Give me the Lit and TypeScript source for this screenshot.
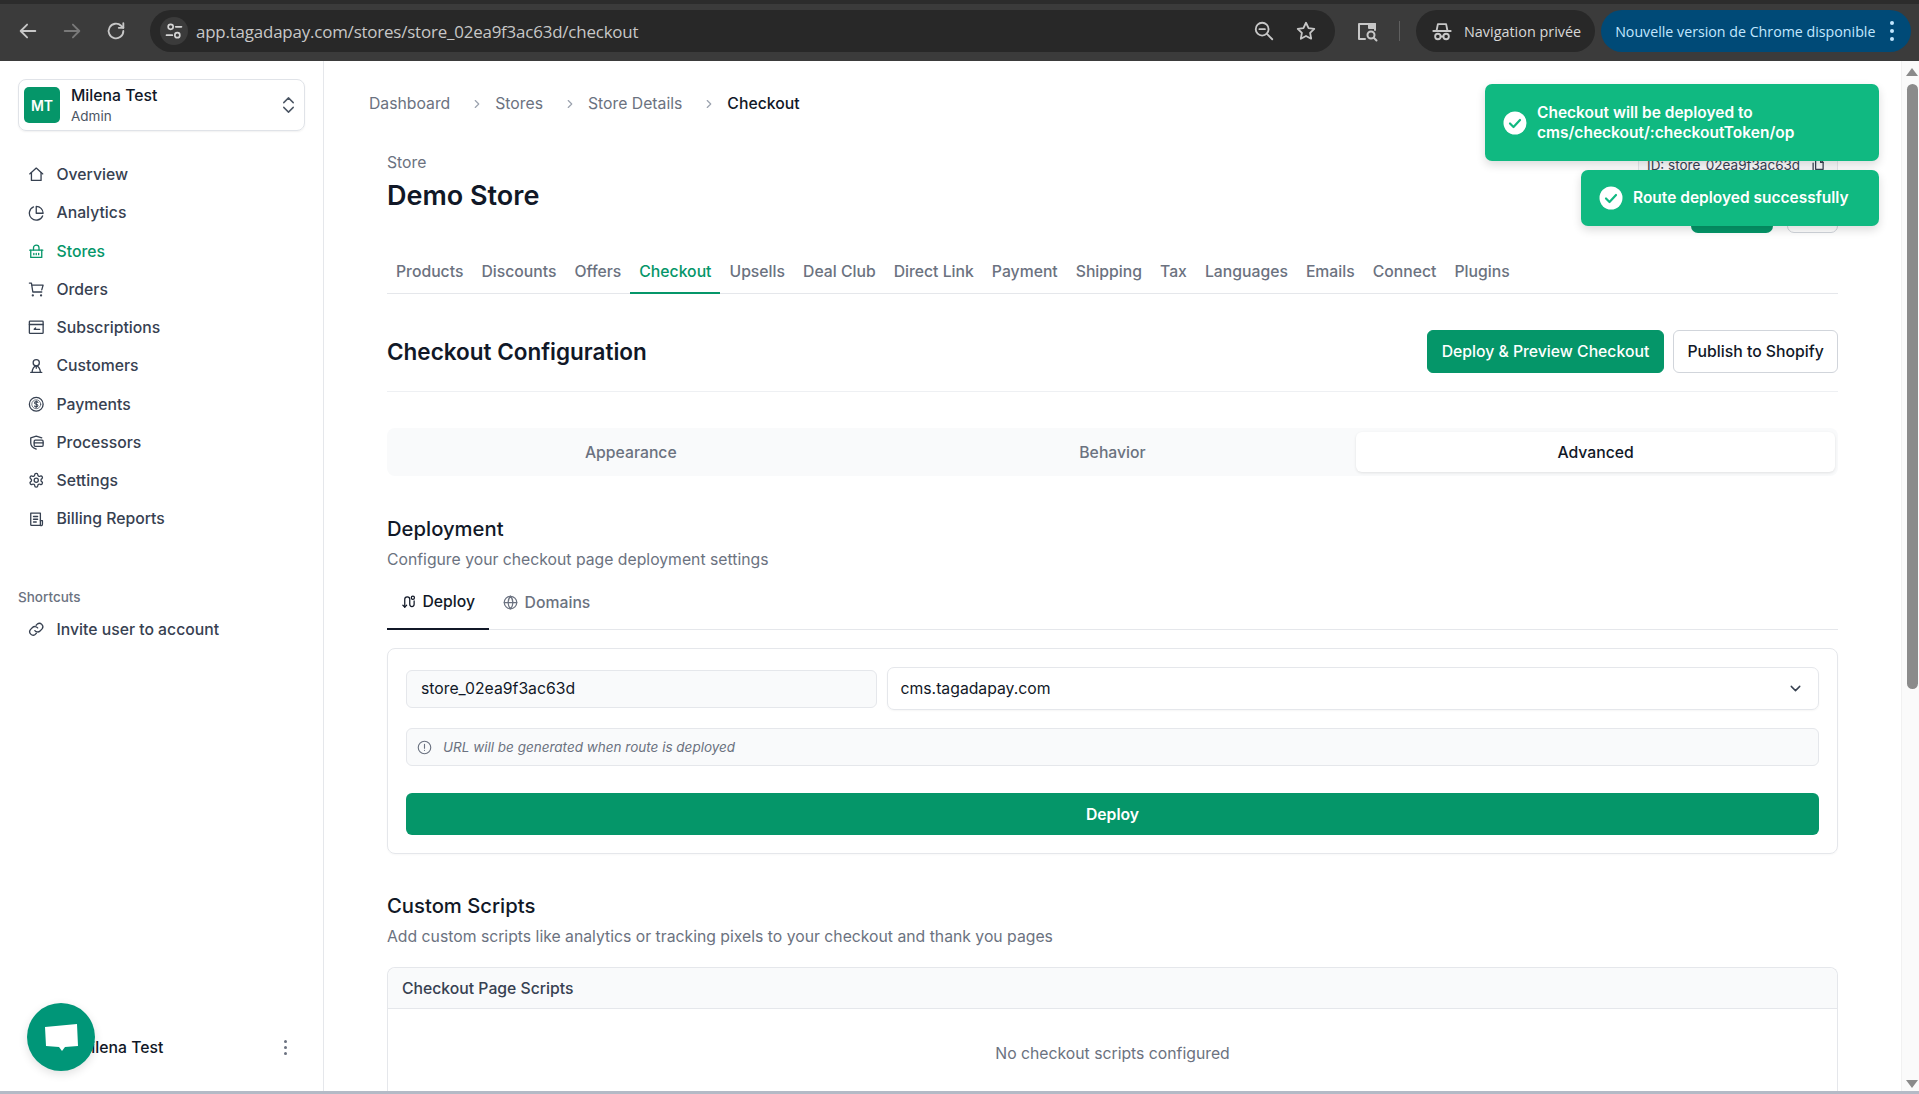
import { LitElement, html, css, svg } from "lit";
import { customElement } from "lit/decorators.js";

const ic = (body: unknown, cls = "ic") => html`<svg class=${cls} viewBox="0 0 24 24" fill="none" stroke="currentColor" stroke-width="2" stroke-linecap="round" stroke-linejoin="round">${body}</svg>`;

const icons: Record<string, unknown> = {
  home: svg`<path d="M2.500 11.500 12 3l9.500 8.500"/><path d="M5 9.500V21h14V9.500"/>`,
  pie: svg`<path d="M21.210 15.890A10 10 0 1 1 8 2.830"/><path d="M22 12A10 10 0 0 0 12 2v10z"/>`,
  basket: svg`<path d="M8 10V7a4 4 0 0 1 8 0v3"/><path d="M2.500 10.500h19"/><path d="M4 10.500V21h16V10.500"/><path d="M8.500 15v2M12 15v2M15.500 15v2"/>`,
  cart: svg`<path d="M2 3h3l2 13h13"/><path d="M6 6h16l-2 7"/><circle cx="7" cy="21" r=".7"/><circle cx="19" cy="21" r=".7"/>`,
  subs: svg`<rect x="2" y="3" width="20" height="18" rx="1"/><path d="M2 8h20"/><path d="M9 15h8M9 15l2-2"/>`,
  user: svg`<circle cx="12" cy="7" r="4.500"/><path d="M4 21h16"/><path d="M6 21c0-5 3-9.500 6-9.500s6 4.500 6 9.500"/><path d="M12 12v3"/>`,
  dollar: svg`<circle cx="12" cy="12" r="10"/><circle cx="12" cy="12" r="6.500" stroke-width="1"/><path d="M14.500 9.500c-.5-1-1.500-1.300-2.500-1.300-1.500 0-2.500.8-2.500 1.900 0 2.600 5 1.200 5 3.800 0 1.100-1 1.900-2.500 1.900-1 0-2-.3-2.500-1.300M12 7v10" stroke-width="1.500"/>`,
  proc: svg`<path d="M12 22c-4-1.500-8-4-8-9V5.500L12 3l8 2.500"/><rect x="9" y="9" width="13" height="9" rx="1.500"/><path d="M9 13h13"/>`,
  gear: svg`<path d="M12.220 2h-.44a2 2 0 0 0-2 2v.18a2 2 0 0 1-1 1.730l-.43.25a2 2 0 0 1-2 0l-.15-.08a2 2 0 0 0-2.730.73l-.22.38a2 2 0 0 0 .73 2.730l.15.1a2 2 0 0 1 1 1.720v.51a2 2 0 0 1-1 1.740l-.15.09a2 2 0 0 0-.73 2.730l.22.38a2 2 0 0 0 2.730.73l.15-.08a2 2 0 0 1 2 0l.43.25a2 2 0 0 1 1 1.730V20a2 2 0 0 0 2 2h.44a2 2 0 0 0 2-2v-.18a2 2 0 0 1 1-1.730l.43-.25a2 2 0 0 1 2 0l.15.08a2 2 0 0 0 2.730-.73l.22-.39a2 2 0 0 0-.73-2.730l-.15-.08a2 2 0 0 1-1-1.740v-.5a2 2 0 0 1 1-1.740l.15-.09a2 2 0 0 0 .73-2.730l-.22-.38a2 2 0 0 0-2.730-.73l-.15.08a2 2 0 0 1-2 0l-.43-.25a2 2 0 0 1-1-1.730V4a2 2 0 0 0-2-2z"/><circle cx="12" cy="12" r="3"/>`,
  bill: svg`<path d="M18 21H5a1 1 0 0 1-1-1V3h14v18z"/><path d="M18 14h3v5a2 2 0 0 1-3 2"/><path d="M8 8h6M8 12h6M8 16h4"/>`,
  link: svg`<path d="M10 14a5 5 0 0 0 7.500.5l3-3a5 5 0 0 0-7-7l-1.700 1.700"/><path d="M14 10a5 5 0 0 0-7.500-.5l-3 3a5 5 0 0 0 7 7l1.700-1.700"/>`,
  route: svg`<circle cx="19" cy="6" r="2.500"/><path d="M6 21V8.500a4 4 0 0 1 8 0v8a3.500 3.500 0 0 0 7 0V11"/><path d="m3 18 3 3 3-3"/>`,
  globe: svg`<circle cx="12" cy="12" r="10"/><path d="M2 12h20"/><path d="M12 2a15 15 0 0 1 0 20 15 15 0 0 1 0-20"/>`,
  info: svg`<circle cx="12" cy="12" r="10"/><path d="M12 7v6M12 16.500v.01"/>`,
  chev: svg`<path d="m6 9 6 6 6-6"/>`,
  updown: svg`<path d="m6 9 6-6 6 6"/><path d="m6 15 6 6 6-6"/>`,
  right: svg`<path d="m9 6 6 6-6 6"/>`,
  copy: svg`<path d="M9 3h8l4 4v11H9z"/><path d="M17 3v4h4"/><path d="M5 8v13h10"/>`,
};

const nav = [
  ["home", "Overview"], ["pie", "Analytics"], ["basket", "Stores"], ["cart", "Orders"], ["subs", "Subscriptions"],
  ["user", "Customers"], ["dollar", "Payments"], ["proc", "Processors"], ["gear", "Settings"], ["bill", "Billing Reports"],
];
const tabs = ["Products", "Discounts", "Offers", "Checkout", "Upsells", "Deal Club", "Direct Link", "Payment", "Shipping", "Tax", "Languages", "Emails", "Connect", "Plugins"];

@customElement("app-root")
export class AppRoot extends LitElement {
  static styles = css`
    :host { display: block; width: 1919px; height: 1094px; position: relative; overflow: hidden; background: #fff; font-family: Inter, "Liberation Sans", sans-serif; color: #111827; }
    * { box-sizing: border-box; }
    svg { display: block; flex: none; }
    .chrome { height: 61px; background: #3b3b3b; border-top: 4px solid #2c2c2c; display: flex; align-items: center; padding: 0 7px 3px 17px; color: #e3e3e3; font-family: "Open Sans", "Noto Sans", sans-serif; }
    .cb { width: 22px; height: 22px; stroke-width: 2; color: #c7c7c7; }
    .cb.dim { color: #797979; }
    .navbtns { display: flex; gap: 22px; align-items: center; }
    .omni { margin-left: 23px; width: 1185px; height: 42px; border-radius: 21px; background: #282828; display: flex; align-items: center; padding: 0 18px 0 10px; }
    .tune { width: 28px; height: 28px; border-radius: 50%; background: #3b3b3b; display: flex; align-items: center; justify-content: center; color: #d5d5d5; }
    .tune svg { width: 20px; height: 20px; }
    .url { margin-left: 8px; font-size: 16.900px; color: #c7c7c7; letter-spacing: -0.18px; flex: 1; white-space: nowrap; }
    .omni .cb { margin-left: 20px; }
    .split { width: 1px; height: 20px; background: #5f5f5f; margin: 0 16px 0 20px; }
    .profile { height: 42px; border-radius: 21px; background: #282828; display: flex; align-items: center; padding: 0 14px 0 15px; gap: 11px; font-size: 14.400px; color: #d8d8d8; white-space: nowrap; }
    .update { margin-left: 6px; height: 42px; width: 310px; border-radius: 21px; background: #004a77; display: flex; align-items: center; padding: 0 0 0 14px; font-size: 14.230px; color: #c2e7ff; white-space: nowrap; }
    .update .dots { margin-left: auto; margin-right: 17px; display: flex; flex-direction: column; gap: 4px; }
    .update i { display: block; width: 4px; height: 4px; border-radius: 50%; background: #c2e7ff; }
    .side-ic { margin-left: 20px; width: 24px; height: 24px; color: #c7c7c7; }

    .body { height: 1030px; display: flex; }
    .baseline { height: 3px; background: #b4bac6; }
    .sidebar { width: 324px; flex: none; border-right: 1px solid #e5e7eb; padding: 18px 18px 0 18px; display: flex; flex-direction: column; }
    .switch { width: 287px; height: 52px; border: 1.5px solid #e0e3e8; border-radius: 8px; display: flex; align-items: center; padding: 0 6px 0 5px; box-shadow: 0 1px 2px rgba(0,0,0,.06); }
    .avatar { width: 36px; height: 36px; background: #059669; border-radius: 5px; color: #fff; font-weight: 600; font-size: 14px; display: flex; align-items: center; justify-content: center; }
    .who { margin-left: 11px; display: flex; flex-direction: column; flex: 1; }
    .who b { font-weight: 500; font-size: 15.750px; line-height: 20px; color: #111827; margin-top: 1px; }
    .who span { font-size: 13.500px; line-height: 18px; color: #4b5563; margin-top: 1px; }
    .switch svg { width: 19px; height: 24px; color: #4b5563; stroke-width: 1.800; }
    .nav { margin-top: 24.600px; display: flex; flex-direction: column; }
    .item { height: 38.250px; display: flex; align-items: center; padding-left: 10px; gap: 12px; font-size: 15.750px; font-weight: 500; color: #374151; white-space: nowrap; }
    .item.on { color: #059669; }
    .item svg { width: 16.500px; height: 16.500px; stroke-width: 1.900; }
    .short { margin-top: 50.400px; font-size: 13.500px; line-height: 18px; font-weight: 500; color: #6b7280; }
    .nav2 { margin-top: 4px; }
    .foot { margin-top: auto; height: 78px; display: flex; align-items: center; justify-content: space-between; padding: 0 0 10px 59px; font-size: 15.750px; font-weight: 500; color: #111827; }
    .kebab { display: flex; flex-direction: column; gap: 3px; margin-right: 18px; }
    .kebab i { display: block; width: 3px; height: 3px; border-radius: 50%; background: #6b7280; }

    .main { flex: 1; min-width: 0; padding: 0 63px; overflow: hidden; }
    .crumbs { display: flex; align-items: center; margin: 32px 0 0 -18px; height: 21px; font-size: 15.750px; color: #6b7280; }
    .crumbs svg { width: 14px; height: 14px; margin: 0 11px 0 20px; color: #9ca3af; }
    .crumbs b { font-weight: 500; color: #111827; }
    .head { margin-top: 37px; height: 96px; display: flex; justify-content: space-between; }
    .store { font-size: 15.750px; line-height: 20px; color: #6b7280; margin-top: 2px; }
    h1 { margin: 6px 0 0; font-size: 27px; line-height: 34px; font-weight: 600; color: #111827; }
    .right { display: flex; flex-direction: column; align-items: flex-end; margin-top: -2px; }
    .id { height: 32px; width: 200px; border: 1px solid #e5e7eb; border-radius: 6px; background: #f9fafb; font-size: 13.500px; display: flex; align-items: center; padding-left: 8px; gap: 10px; white-space: nowrap; color: #374151; }
    .id svg { width: 15px; height: 15px; }
    .rbtns { display: flex; gap: 14px; margin-top: 10px; }
    .rb { width: 82px; height: 42px; border-radius: 7px; background: #059669; }
    .rb.w { width: 51px; background: #fff; border: 1px solid #d1d5db; }
    .tabs { display: flex; height: 48px; margin-top: -1px; border-bottom: 1px solid #e5e7eb; }
    .tab { padding: 4px 9px 0; height: 48px; display: flex; align-items: center; font-size: 15.750px; font-weight: 500; color: #6b7280; white-space: nowrap; border-bottom: 2px solid transparent; }
    .tab.on { color: #059669; border-bottom-color: #059669; }
    .cfg { margin-top: 36px; height: 62px; display: flex; align-items: flex-start; justify-content: space-between; border-bottom: 1px solid #eef0f3; }
    h2 { margin: 4px 0 0; font-size: 22.500px; line-height: 36px; font-weight: 600; color: #111827; }
    .btns { display: flex; gap: 9px; }
    .btn { height: 43px; border-radius: 6px; padding: 0 13.250px; display: flex; align-items: center; font-size: 15.750px; font-weight: 500; white-space: nowrap; background: #fff; border: 1px solid #d1d5db; color: #111827; }
    .btn.g { background: #059669; border-color: #059669; color: #fff; padding: 0 14px; }
    .seg { margin-top: 36px; height: 48px; background: #f9fafb; border-radius: 8px; padding: 4px 3px; display: grid; grid-template-columns: 1fr 1fr 1fr; }
    .seg div { display: flex; align-items: center; justify-content: center; font-size: 15.750px; font-weight: 500; color: #6b7280; border-radius: 6px; }
    .seg .on { background: #fff; color: #111827; box-shadow: 0 1px 3px rgba(0,0,0,.1); margin-left: 3px; }
    h3 { margin: 0; font-size: 20.250px; line-height: 28px; font-weight: 500; color: #111827; }
    .sec1 { margin-top: 39px; }
    .sub { margin-top: 6px; font-size: 15.750px; line-height: 22px; color: #6b7280; }
    .dtabs { margin-top: 10px; height: 49px; display: flex; border-bottom: 1px solid #e5e7eb; }
    .dtab { height: 49px; padding: 0 14px 7px; display: flex; align-items: center; gap: 6.500px; font-size: 15.750px; font-weight: 500; color: #6b7280; margin-bottom: -1px; }
    .dtab svg { width: 15px; height: 15px; }
    .dtab.on { color: #111827; border-bottom: 2.500px solid #111827; }
    .card { margin-top: 18px; height: 206px; border: 1.5px solid #e5e7eb; border-radius: 8px; padding: 18px 18px 0; box-shadow: 0 1px 2px rgba(0,0,0,.03); }
    .row { display: flex; gap: 9.500px; align-items: center; }
    .inp { flex: none; width: 471px; height: 38px; border: 1px solid #e5e7eb; border-radius: 6px; background: #f9fafb; padding-left: 14px; display: flex; align-items: center; font-size: 15.750px; color: #111827; }
    .sel { flex: 1; height: 43px; border: 1.5px solid #e5e7eb; border-radius: 7px; padding: 0 14px 0 13px; display: flex; align-items: center; justify-content: space-between; font-size: 15.750px; color: #111827; box-shadow: 0 1px 2px rgba(0,0,0,.04); }
    .sel svg { width: 17px; height: 17px; color: #374151; }
    .note { margin-top: 18px; height: 38px; border: 1px solid #e5e7eb; border-radius: 6px; background: #f9fafb; display: flex; align-items: center; padding-left: 10px; gap: 11px; font-size: 13.500px; font-style: italic; color: #6b7280; }
    .note svg { width: 15px; height: 15px; stroke-width: 1.800; }
    .go { margin-top: 27px; height: 42px; border-radius: 6px; background: #059669; color: #fff; display: flex; align-items: center; justify-content: center; font-size: 15.750px; font-weight: 600; }
    .sec2 { margin-top: 38px; }
    .script { margin-top: 19px; border: 1px solid #e5e7eb; border-bottom: 0; border-radius: 8px 8px 0 0; height: 127px; }
    .shead { height: 41px; background: #f9fafb; border-bottom: 1px solid #e5e7eb; border-radius: 8px 8px 0 0; display: flex; align-items: center; padding-left: 14px; font-size: 15.750px; font-weight: 500; color: #374151; }
    .empty { height: 85px; display: flex; align-items: center; justify-content: center; padding-top: 4px; font-size: 15.750px; color: #6b7280; }
    .bar { width: 18px; flex: none; background: #fafafa; border-left: 1px solid #f1f1f1; display: flex; flex-direction: column; align-items: center; padding: 7px 0 0 3px; }
    .up { width: 0; height: 0; border: 6px solid transparent; border-top: 0; border-bottom: 8px solid #8a8a8a; }
    .thumb { width: 11px; height: 605px; margin-top: 8px; background: #8b8b8b; border-radius: 6px; }
    .down { margin-top: auto; margin-bottom: 3px; width: 0; height: 0; border: 6px solid transparent; border-bottom: 0; border-top: 8px solid #8a8a8a; }

    .toasts { position: absolute; right: 40px; top: 84px; display: flex; flex-direction: column; align-items: flex-end; gap: 9px; }
    .toast { background: #10b981; color: #fff; border-radius: 7px; display: flex; align-items: center; font-size: 15.500px; line-height: 20px; font-weight: 600; box-shadow: 0 4px 10px rgba(0,0,0,.14); padding-left: 18px; gap: 10px; }
    .toast.a { width: 394px; height: 77px; }
    .toast.b { width: 298px; height: 56px; }
    .check { width: 24px; height: 24px; }
    .fab { position: absolute; left: 27px; top: 1003px; width: 68px; height: 68px; border-radius: 50%; background: #009678; box-shadow: 0 3px 10px rgba(0,0,0,.12); display: flex; align-items: center; justify-content: center; }
    .fab svg { width: 33px; height: 27px; }
  `;

  render() {
    return html`
      <div class="chrome">
        <div class="navbtns">
          ${ic(svg`<path d="M20 12H4M11 5l-7 7 7 7"/>`, "cb")}
          ${ic(svg`<path d="M4 12h16M13 5l7 7-7 7"/>`, "cb dim")}
          ${ic(svg`<path d="M20 12a8 8 0 1 1-2.400-5.700L20 8.500"/><path d="M20 3.500v5h-5"/>`, "cb")}
        </div>
        <div class="omni">
          <div class="tune">${ic(svg`<circle cx="8" cy="7" r="3"/><path d="M14 7h7"/><circle cx="16" cy="17" r="3"/><path d="M3 17h7"/>`)}</div>
          <div class="url">app.tagadapay.com/stores/store_02ea9f3ac63d/checkout</div>
          ${ic(svg`<circle cx="10" cy="10" r="7"/><path d="M7 10h6M15.500 15.500 21 21"/>`, "cb")}
          ${ic(svg`<path d="m12 3 2.800 5.800 6.200.9-4.500 4.400 1.100 6.300-5.600-3-5.600 3 1.100-6.300L3 9.700l6.200-.9z"/>`, "cb")}
        </div>
        ${ic(svg`<path d="M20 11V5H4v15h6"/><path d="M14 5h6v4h-6z" fill="currentColor"/><circle cx="16" cy="16" r="3.500"/><path d="m19 19 2.500 2.500"/>`, "side-ic")}
        <div class="split"></div>
        <div class="profile">
          ${ic(svg`<path d="M2.500 12h19M6 12l1.500-7.500h9L18 12"/><circle cx="7.500" cy="18" r="3"/><circle cx="16.500" cy="18" r="3"/><path d="M10.500 18h3"/>`, "cb")}
          Navigation privée
        </div>
        <div class="update">Nouvelle version de Chrome disponible <span class="dots"><i></i><i></i><i></i></span></div>
      </div>
      <div class="body">
        <aside class="sidebar">
          <div class="switch">
            <div class="avatar">MT</div>
            <div class="who"><b>Milena Test</b><span>Admin</span></div>
            ${ic(icons.updown)}
          </div>
          <nav class="nav">
            ${nav.map(([i, t]) => html`<div class="item ${t === "Stores" ? "on" : ""}">${ic(icons[i])}${t}</div>`)}
          </nav>
          <div class="short">Shortcuts</div>
          <div class="nav2"><div class="item">${ic(icons.link)}Invite user to account</div></div>
          <div class="foot"><span>Milena Test</span><span class="kebab"><i></i><i></i><i></i></span></div>
        </aside>
        <main class="main">
          <div class="crumbs"><span>Dashboard</span>${ic(icons.right)}<span>Stores</span>${ic(icons.right)}<span>Store Details</span>${ic(icons.right)}<b>Checkout</b></div>
          <div class="head">
            <div><div class="store">Store</div><h1>Demo Store</h1></div>
            <div class="right">
              <div class="id">ID: store_02ea9f3ac63d ${ic(icons.copy)}</div>
              <div class="rbtns"><div class="rb"></div><div class="rb w"></div></div>
            </div>
          </div>
          <div class="tabs">${tabs.map((t) => html`<div class="tab ${t === "Checkout" ? "on" : ""}">${t}</div>`)}</div>
          <div class="cfg">
            <h2>Checkout Configuration</h2>
            <div class="btns"><div class="btn g">Deploy &amp; Preview Checkout</div><div class="btn">Publish to Shopify</div></div>
          </div>
          <div class="seg"><div>Appearance</div><div>Behavior</div><div class="on">Advanced</div></div>
          <h3 class="sec1">Deployment</h3>
          <div class="sub">Configure your checkout page deployment settings</div>
          <div class="dtabs">
            <div class="dtab on">${ic(icons.route)}Deploy</div>
            <div class="dtab">${ic(icons.globe)}Domains</div>
          </div>
          <div class="card">
            <div class="row"><div class="inp">store_02ea9f3ac63d</div><div class="sel">cms.tagadapay.com ${ic(icons.chev)}</div></div>
            <div class="note">${ic(icons.info)}URL will be generated when route is deployed</div>
            <div class="go">Deploy</div>
          </div>
          <h3 class="sec2">Custom Scripts</h3>
          <div class="sub">Add custom scripts like analytics or tracking pixels to your checkout and thank you pages</div>
          <div class="script"><div class="shead">Checkout Page Scripts</div><div class="empty">No checkout scripts configured</div></div>
        </main>
        <div class="bar"><div class="up"></div><div class="thumb"></div><div class="down"></div></div>
      </div>
      <div class="baseline"></div>
      <div class="toasts">
        <div class="toast a">
          <svg class="check" viewBox="0 0 24 24"><circle cx="12" cy="12" r="11.500" fill="#fff"/><path d="m7 12.500 3.500 3.500 6.500-7" fill="none" stroke="#10b981" stroke-width="2.200" stroke-linecap="round" stroke-linejoin="round"/></svg>
          <span>Checkout will be deployed to<br />cms/checkout/:checkoutToken/op</span>
        </div>
        <div class="toast b">
          <svg class="check" viewBox="0 0 24 24"><circle cx="12" cy="12" r="11.500" fill="#fff"/><path d="m7 12.500 3.500 3.500 6.500-7" fill="none" stroke="#10b981" stroke-width="2.200" stroke-linecap="round" stroke-linejoin="round"/></svg>
          <span>Route deployed successfully</span>
        </div>
      </div>
      <div class="fab"><svg viewBox="0 0 33 27"><path d="M0 3 32 0l1 22-13 1-3 4-3-4-13-1z" fill="#fff"/></svg></div>
    `;
  }
}
